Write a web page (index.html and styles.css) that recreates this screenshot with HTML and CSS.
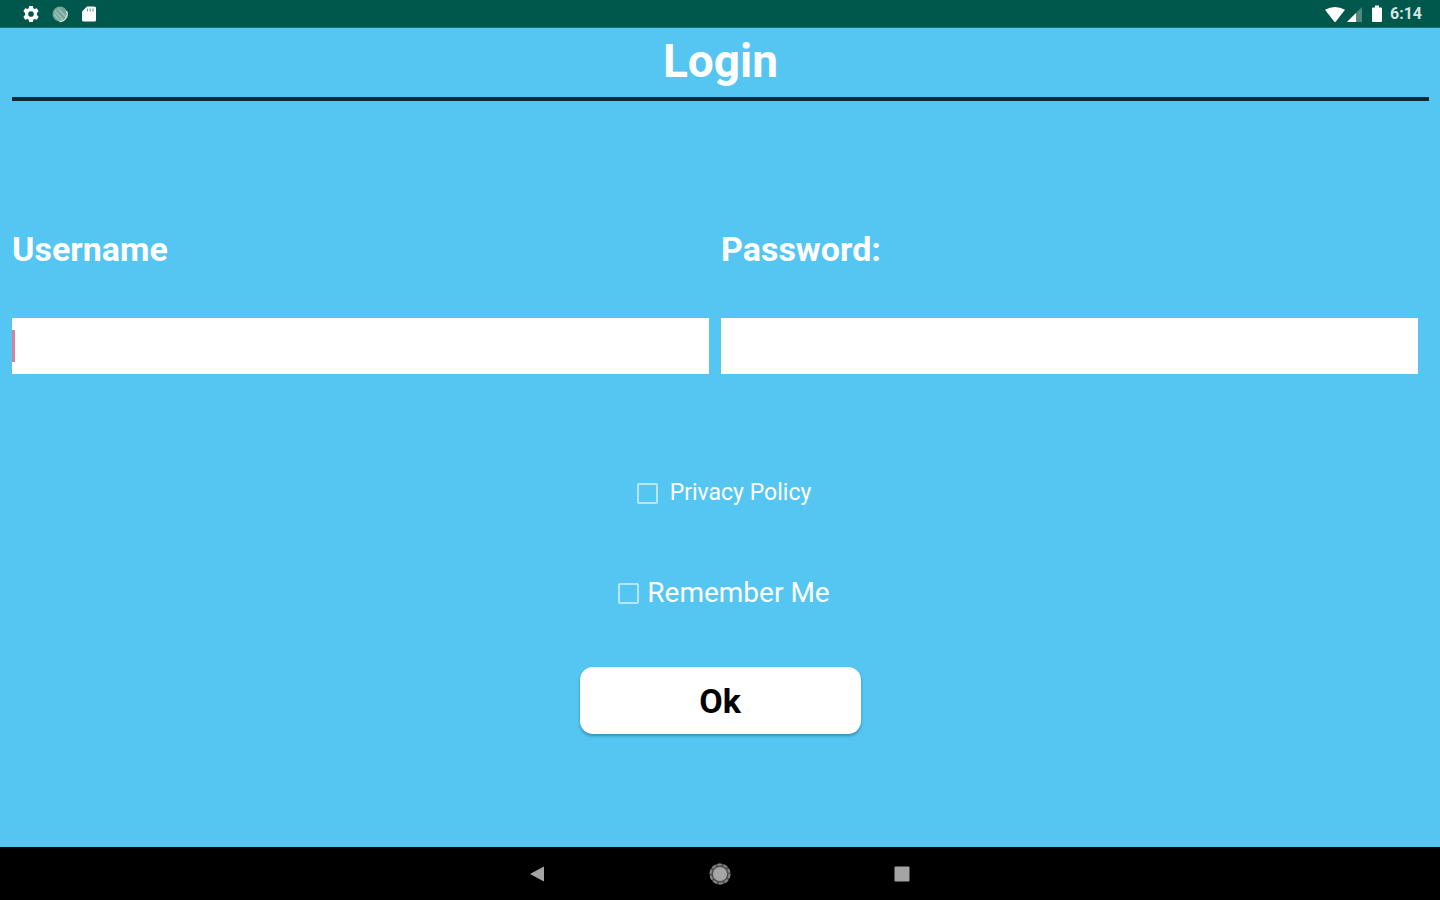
FILE: index.html
```html
<!DOCTYPE html>
<html lang="en">
<head>
<meta charset="utf-8">
<meta name="viewport" content="width=device-width, initial-scale=1">
<title>Login</title>
<link rel="stylesheet" href="styles.css">
</head>
<body>
<header class="status-bar">
  <div class="status-left">
    <svg width="18" height="18" viewBox="0 0 18 18" aria-hidden="true"><path fill="#fff" fill-rule="evenodd" d="M7.200 1h3.600l.5 2.200 1.300.7 2.200-.7 1.800 3.100-1.700 1.600v2.200l1.700 1.600-1.800 3.100-2.200-.7-1.300.7-.5 2.200H7.200l-.5-2.200-1.300-.7-2.200.7-1.800-3.100 1.700-1.600V7.900L1.400 6.300l1.800-3.100 2.200.7 1.300-.7zM9 6.200a2.800 2.800 0 1 0 0 5.600 2.800 2.800 0 0 0 0-5.600z"/></svg>
    <svg width="18" height="18" viewBox="0 0 18 18" aria-hidden="true"><circle cx="9" cy="9" r="7.500" fill="#75a69c"/><path d="M4 6l8 9M3 9l6 7M7 4l8 8" stroke="#a2c3bc" stroke-width="1.200"/><path d="M15.500 6a7.500 7.500 0 0 1-7 10.500" fill="none" stroke="#c6dad6" stroke-width="1.500"/></svg>
    <svg width="18" height="18" viewBox="0 0 18 18" aria-hidden="true"><path fill="#fff" d="M7 1.500h7.500q1.500 0 1.500 1.500v12q0 1.500-1.500 1.500h-11Q2 16.500 2 15V6.500z"/><path stroke="#6f9e95" stroke-width="1.200" d="M7.500 3.500v3M10.200 3.500v3M13 3.500v3"/></svg>
  </div>
  <div class="status-right">
    <svg width="56" height="20" viewBox="0 0 56 20" aria-hidden="true"><path fill="#fff" d="M0 5.800Q10 .2 20 5.800L10.500 18h-1z"/><path fill="#51877e" d="M37 3v15H22z"/><path fill="#fff" d="M31 9v9h-9z"/><path fill="#fff" d="M50 1.500h4v2h2q1 0 1 1V17q0 1-1 1h-8q-1 0-1-1V4.500q0-1 1-1h2z"/></svg>
    <time class="clock">6:14</time>
  </div>
</header>
<main class="screen">
  <h1 class="title">Login</h1>
  <form class="form">
    <div class="fields">
      <div class="field">
        <label class="label" for="username">Username</label>
        <div class="entry"><input class="input" id="username" type="text"><span class="caret"></span></div>
      </div>
      <div class="field">
        <label class="label" for="password">Password:</label>
        <div class="entry"><input class="input" id="password" type="password"></div>
      </div>
    </div>
    <div class="option option-privacy">
      <input class="check" id="privacy" type="checkbox">
      <label for="privacy">Privacy Policy</label>
    </div>
    <div class="option option-remember">
      <input class="check" id="remember" type="checkbox">
      <label for="remember">Remember Me</label>
    </div>
    <button class="ok" type="button">Ok</button>
  </form>
</main>
<nav class="nav-bar" aria-label="System">
  <button class="nav-button" type="button" aria-label="Back"><svg width="24" height="24" viewBox="0 0 24 24"><path fill="#a4a4a4" d="M4 12L18 4.500v15z"/></svg></button>
  <button class="nav-button" type="button" aria-label="Home"><svg width="24" height="24" viewBox="0 0 24 24"><circle cx="12" cy="12" r="10.500" fill="#4f4f4f"/><circle cx="12" cy="12" r="9.500" fill="none" stroke="#858585" stroke-width="2" stroke-dasharray="4 2"/><circle cx="12" cy="12" r="7" fill="#a6a6a6"/></svg></button>
  <button class="nav-button" type="button" aria-label="Recent apps"><svg width="24" height="24" viewBox="0 0 24 24"><rect x="4.500" y="4.500" width="15" height="15" rx="1" fill="#a4a4a4"/></svg></button>
</nav>
</body>
</html>
```
FILE: styles.css
```css
* {
  box-sizing: border-box;
}

body {
  margin: 0;
  min-height: 100vh;
  display: flex;
  flex-direction: column;
  background: #54c6f1;
  color: #fff;
  font-family: Roboto, "Liberation Sans", sans-serif;
}

.status-bar {
  display: flex;
  justify-content: space-between;
  align-items: center;
  height: 28px;
  padding: 0 18px 0 22px;
  background: #00574b;
  border-bottom: 1px solid #1d6f75;
}

.status-left {
  display: flex;
  gap: 11px;
}

.status-left svg,
.status-right svg {
  display: block;
  overflow: visible;
}

.status-right {
  display: flex;
  align-items: center;
  gap: 9px;
}

.clock {
  font-size: 16px;
  line-height: 20px;
  font-weight: 700;
  color: #d5e4e1;
}

.screen {
  flex: 1;
}

.title {
  margin: 0 11px 0 12px;
  padding: 6px 0 9px;
  border-bottom: 4px solid #0b2a35;
  font-size: 46px;
  line-height: 54px;
  font-weight: 700;
  text-align: center;
}

.form {
  display: flex;
  flex-direction: column;
  align-items: center;
}

.fields {
  align-self: stretch;
  display: grid;
  grid-template-columns: 1fr 1fr;
  gap: 12px;
  padding: 128px 22px 0 12px;
}

.field {
  display: flex;
  flex-direction: column;
  gap: 49px;
}

.label {
  font-size: 34px;
  line-height: 40px;
  font-weight: 700;
}

.entry {
  position: relative;
}

.input {
  display: block;
  width: 100%;
  height: 56px;
  padding: 0 4px;
  border: 0;
  border-radius: 0;
  background: #fff;
  font: 400 28px/32px Roboto, sans-serif;
}

.caret {
  position: absolute;
  left: 0;
  top: 12px;
  width: 3px;
  height: 32px;
  background: #dc7f9f;
}

.option {
  display: flex;
  align-items: center;
  padding-left: 8px;
  line-height: 32px;
}

.option-privacy {
  gap: 12px;
  margin-top: 103px;
  font-size: 23px;
}

.option-remember {
  gap: 8px;
  margin-top: 68px;
  font-size: 28px;
}

.check {
  appearance: none;
  width: 21px;
  height: 21px;
  margin: 0;
  border: 2px solid #b8e7fa;
  border-radius: 2px;
}

.check:checked {
  background: #fff;
}

.ok {
  width: 281px;
  height: 67px;
  margin-top: 58px;
  padding: 0;
  border: 0;
  border-radius: 13px;
  background: #fff;
  box-shadow: 0 2px 3px rgba(0, 60, 85, 0.4);
  color: #000;
  font: 700 34px/40px Roboto, sans-serif;
}

.nav-bar {
  display: flex;
  justify-content: center;
  align-items: center;
  gap: 158px;
  height: 53px;
  background: #000;
}

.nav-button {
  display: block;
  width: 24px;
  height: 24px;
  padding: 0;
  border: 0;
  background: none;
}

.nav-button svg {
  display: block;
}
```
